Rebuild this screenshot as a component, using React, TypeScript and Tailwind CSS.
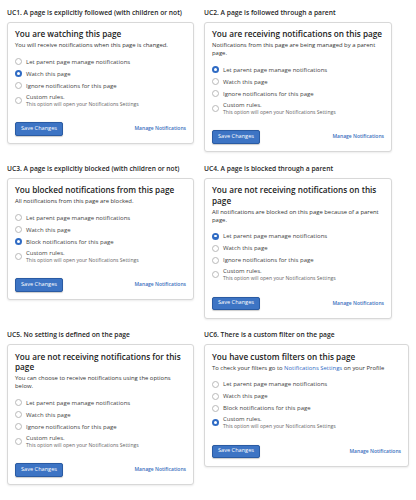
import React from 'react';

type Option = { label: string; sub?: string };

interface CaseCardProps {
  heading: string;
  title: string;
  subtitle: React.ReactNode;
  options: Option[];
  selected: number;
  width: string;
}

const Radio: React.FC<{ checked: boolean }> = ({ checked }) =>
  checked ? (
    <span className="flex h-[7px] w-[7px] shrink-0 items-center justify-center rounded-full bg-[#2f6bc4]">
      <span className="h-[2.5px] w-[2.5px] rounded-full bg-white" />
    </span>
  ) : (
    <span className="h-[7px] w-[7px] shrink-0 rounded-full border-[0.6px] border-[#b9b9b9] bg-white" />
  );

const CaseCard: React.FC<CaseCardProps> = ({ heading, title, subtitle, options, selected, width }) => (
  <div className={width}>
    <div className="mb-[5px] text-[6.7px] font-semibold leading-[9px] text-[#1f1f1f]">{heading}</div>
    <div className="rounded-[3px] border-[0.6px] border-[#d8d8d8] bg-white px-[7px] pb-[7.5px] pt-[6.5px] shadow-[0_1px_2px_rgba(0,0,0,0.08)]">
      <div className="text-[8.2px] font-semibold leading-[10.5px] text-[#222]">{title}</div>
      <div className="mt-[1.5px] text-[5.9px] leading-[8px] text-[#333]">{subtitle}</div>

      {/* options */}
      <div className="mt-[6.5px]">
        {options.map((opt, i) =>
          opt.sub ? (
            <div key={i} className="mt-[1px] flex items-center gap-[4px]">
              <Radio checked={i === selected} />
              <div>
                <div className="text-[6px] leading-[8px] text-[#444]">{opt.label}</div>
                <div className="text-[5.1px] leading-[7px] text-[#666]">{opt.sub}</div>
              </div>
            </div>
          ) : (
            <div key={i} className="flex h-[12px] items-center gap-[4px]">
              <Radio checked={i === selected} />
              <span className="text-[6px] leading-[8px] text-[#444]">{opt.label}</span>
            </div>
          )
        )}
      </div>

      <div className="mt-[14.5px] flex items-center justify-between">
        <button className="h-[13.5px] w-[48px] rounded-[2px] border-[0.8px] border-[#2a5ba3] bg-[#3d74c4] text-[5.6px] leading-none text-white shadow-[0_0.5px_1px_rgba(0,0,0,0.2)]">
          Save Changes
        </button>
        <a className="text-[5px] font-semibold leading-[7px] text-[#3a6fbd]">Manage Notifications</a>
      </div>
    </div>
  </div>
);

const custom: Option = { label: 'Custom rules.', sub: 'This option will open your Notifications Settings' };

const watchOpts: Option[] = [
  { label: 'Let parent page manage notifications' },
  { label: 'Watch this page' },
  { label: 'Ignore notifications for this page' },
  custom,
];

const blockOpts: Option[] = [
  { label: 'Let parent page manage notifications' },
  { label: 'Watch this page' },
  { label: 'Block notifications for this page' },
  custom,
];

export default function App() {
  return (
    <div
      className="min-h-[500px] w-[416px] bg-white px-[7px] pt-[7.5px]"
      style={{ fontFamily: '"Open Sans", "Noto Sans", sans-serif' }}
    >
      <div className="grid grid-cols-[187px_1fr] gap-x-[10px] gap-y-[11.5px] items-start">
        <CaseCard
          width="w-[187px]"
          heading="UC1. A page is explicitly followed (with children or not)"
          title="You are watching this page"
          subtitle="You will receive notifications when this page is changed."
          options={watchOpts}
          selected={1}
        />
        <CaseCard
          width="w-[188px]"
          heading="UC2. A page is followed through a parent"
          title="You are receiving notifications on this page"
          subtitle="Notifications from this page are being managed by a parent page."
          options={watchOpts}
          selected={0}
        />
        <CaseCard
          width="w-[187px]"
          heading="UC3. A page is explicitly blocked (with children or not)"
          title="You blocked notifications from this page"
          subtitle="All notifications from this page are blocked."
          options={blockOpts}
          selected={2}
        />
        <CaseCard
          width="w-[188px]"
          heading="UC4. A page is blocked through a parent"
          title="You are not receiving notifications on this page"
          subtitle="All notifications are blocked on this page because of a parent page."
          options={watchOpts}
          selected={0}
        />
        <CaseCard
          width="w-[187px]"
          heading="UC5. No setting is defined on the page"
          title="You are not receiving notifications for this page"
          subtitle="You can choose to receive notifications using the options below."
          options={watchOpts}
          selected={-1}
        />
        <CaseCard
          width="w-[205px]"
          heading="UC6. There is a custom filter on the page"
          title="You have custom filters on this page"
          subtitle={
            <span className="whitespace-nowrap">
              To check your filters go to <span className="text-[#2f6bc4]">Notifications Settings</span> on your Profile
            </span>
          }
          options={blockOpts}
          selected={3}
        />
      </div>
    </div>
  );
}
